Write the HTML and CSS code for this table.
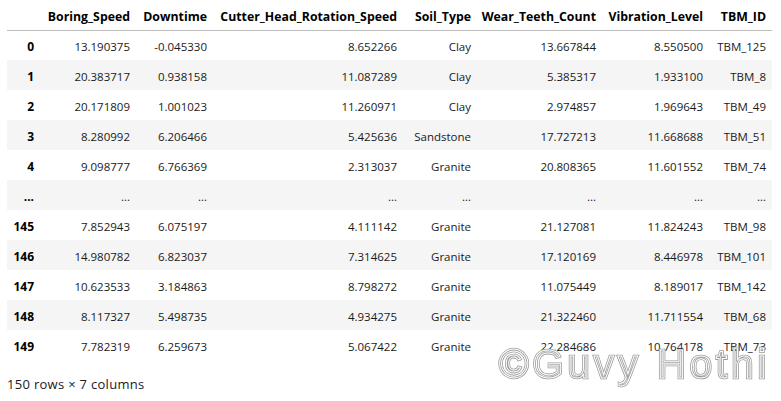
FILE: index.html
```html
<!DOCTYPE html>
<html>
<head>
<meta charset="utf-8">
<link rel="stylesheet" href="styles.css">
</head>
<body>
<div class="output">
  <table class="dataframe">
    <colgroup>
      <col class="c-idx"><col class="c-bs"><col class="c-dt"><col class="c-ch"><col class="c-st"><col class="c-wt"><col class="c-vl"><col class="c-id">
    </colgroup>
    <thead>
      <tr><th></th><th>Boring_Speed</th><th>Downtime</th><th>Cutter_Head_Rotation_Speed</th><th>Soil_Type</th><th>Wear_Teeth_Count</th><th>Vibration_Level</th><th>TBM_ID</th></tr>
    </thead>
    <tbody>
      <tr><th>0</th><td>13.190375</td><td>-0.045330</td><td>8.652266</td><td>Clay</td><td>13.667844</td><td>8.550500</td><td>TBM_125</td></tr>
      <tr><th>1</th><td>20.383717</td><td>0.938158</td><td>11.087289</td><td>Clay</td><td>5.385317</td><td>1.933100</td><td>TBM_8</td></tr>
      <tr><th>2</th><td>20.171809</td><td>1.001023</td><td>11.260971</td><td>Clay</td><td>2.974857</td><td>1.969643</td><td>TBM_49</td></tr>
      <tr><th>3</th><td>8.280992</td><td>6.206466</td><td>5.425636</td><td>Sandstone</td><td>17.727213</td><td>11.668688</td><td>TBM_51</td></tr>
      <tr><th>4</th><td>9.098777</td><td>6.766369</td><td>2.313037</td><td>Granite</td><td>20.808365</td><td>11.601552</td><td>TBM_74</td></tr>
      <tr><th>...</th><td>...</td><td>...</td><td>...</td><td>...</td><td>...</td><td>...</td><td>...</td></tr>
      <tr><th>145</th><td>7.852943</td><td>6.075197</td><td>4.111142</td><td>Granite</td><td>21.127081</td><td>11.824243</td><td>TBM_98</td></tr>
      <tr><th>146</th><td>14.980782</td><td>6.823037</td><td>7.314625</td><td>Granite</td><td>17.120169</td><td>8.446978</td><td>TBM_101</td></tr>
      <tr><th>147</th><td>10.623533</td><td>3.184863</td><td>8.798272</td><td>Granite</td><td>11.075449</td><td>8.189017</td><td>TBM_142</td></tr>
      <tr><th>148</th><td>8.117327</td><td>5.498735</td><td>4.934275</td><td>Granite</td><td>21.322460</td><td>11.711554</td><td>TBM_68</td></tr>
      <tr><th>149</th><td>7.782319</td><td>6.259673</td><td>5.067422</td><td>Granite</td><td>22.284686</td><td>10.764178</td><td>TBM_73</td></tr>
    </tbody>
  </table>
  <p class="shape">150 rows × 7 columns</p>
  <svg class="watermark" width="290" height="60" viewBox="0 0 290 60" aria-hidden="true">
    <text class="wm wm-outer" x="2" y="45">©Guvy Hothi</text>
    <text class="wm wm-inner" x="2" y="45">©Guvy Hothi</text>
  </svg>
</div>
</body>
</html>
```
FILE: styles.css
```css
html, body {
  margin: 0;
  padding: 0;
  background: #ffffff;
}
body {
  font-family: "Open Sans", "Noto Sans", sans-serif;
  font-size: 11.5px;
  color: #1a1a1a;
}
.output {
  position: relative;
  width: 781px;
  height: 401px;
  padding-left: 7px;
  box-sizing: border-box;
}
.dataframe {
  border-collapse: collapse;
  border-spacing: 0;
  table-layout: fixed;
  width: 765px;
}
.c-idx { width: 33px; }
.c-bs { width: 96px; }
.c-dt { width: 77px; }
.c-ch { width: 190px; }
.c-st { width: 74px; }
.c-wt { width: 125px; }
.c-vl { width: 107px; }
.c-id { width: 63px; }
.dataframe th,
.dataframe td {
  text-align: right;
  padding: 0 6px 0 0;
  white-space: nowrap;
  line-height: 14px;
  vertical-align: middle;
}
.dataframe thead th {
  height: 30px;
  padding-top: 4px;
  box-sizing: border-box;
  font-weight: 700;
  font-size: 12.3px;
  color: #000;
  border-bottom: 1px solid #bdbdbd;
}
.dataframe tbody th,
.dataframe tbody td {
  height: 30px;
  padding-top: 4px;
  box-sizing: border-box;
}
.dataframe tbody th {
  font-weight: 700;
  font-size: 12px;
  color: #000;
}
.dataframe tbody tr:nth-child(even) {
  background: #f5f5f5;
}
.shape {
  margin: 16px 0 0 0;
  font-size: 13px;
  letter-spacing: 0.3px;
  line-height: 16px;
  color: #1a1a1a;
}
.watermark {
  position: absolute;
  left: 497px;
  top: 333px;
  overflow: visible;
  pointer-events: none;
  will-change: transform;
}
.wm {
  font-family: "Liberation Sans", Arial, sans-serif;
  font-size: 40px;
  letter-spacing: 4px;
  fill: none;
}
.wm-outer {
  stroke: #9a9a9a;
  stroke-width: 2.6px;
}
.wm-inner {
  stroke: #ffffff;
  stroke-width: 1px;
}
```
